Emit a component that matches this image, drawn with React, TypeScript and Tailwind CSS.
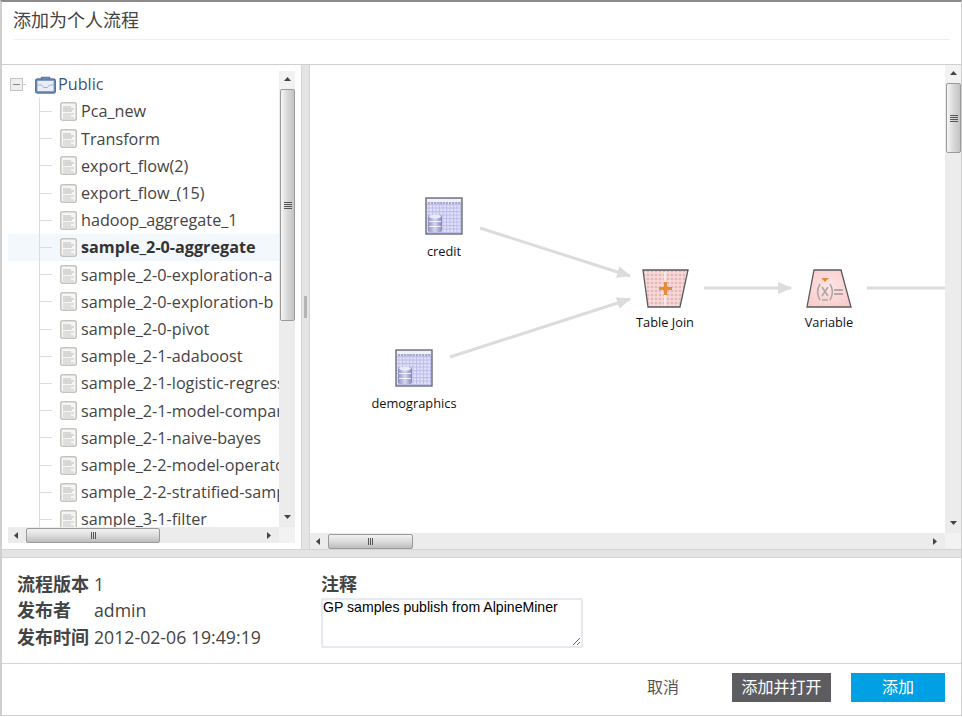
import type { ReactNode } from "react";

const flows = [
  "Pca_new",
  "Transform",
  "export_flow(2)",
  "export_flow_(15)",
  "hadoop_aggregate_1",
  "sample_2-0-aggregate",
  "sample_2-0-exploration-a",
  "sample_2-0-exploration-b",
  "sample_2-0-pivot",
  "sample_2-1-adaboost",
  "sample_2-1-logistic-regression",
  "sample_2-1-model-comparison",
  "sample_2-1-naive-bayes",
  "sample_2-2-model-operators",
  "sample_2-2-stratified-sampling",
  "sample_3-1-filter",
];

function DocIcon() {
  return (
    <svg width="17" height="19" viewBox="0 0 17 19" className="shrink-0">
      <rect x="0.75" y="0.75" width="15.5" height="17.5" rx="2" fill="#f6f6f6" stroke="#c4c4bc" strokeWidth="1.5" />
      <path d="M3 5h8M3 7h11M3 9h9" stroke="#b8b8b8" />
      <path d="M3 12h11M3 14h8M3 16h11" stroke="#c6c6c6" />
    </svg>
  );
}

function BriefcaseIcon() {
  return (
    <svg width="21" height="18" viewBox="0 0 21 18" className="shrink-0">
      <path d="M6.5 3V1.5h8V3" fill="none" stroke="#5f7da6" strokeWidth="1.5" />
      <rect x="0.75" y="3" width="19.5" height="14" rx="2" fill="#7f9cc4" stroke="#56749e" strokeWidth="1.5" />
      <rect x="2.5" y="5" width="16" height="10" fill="#e9eef5" />
      <path d="M2.5 9l4 0 2 2.5h4l2-2.5 4 0" fill="none" stroke="#9fb3cf" />
    </svg>
  );
}

function Grip({ vertical }: { vertical?: boolean }) {
  return vertical ? (
    <div className="flex flex-col gap-[1px]">
      <div className="w-[8px] h-[1px] bg-[#555]" />
      <div className="w-[8px] h-[1px] bg-[#555]" />
      <div className="w-[8px] h-[1px] bg-[#555]" />
      <div className="w-[8px] h-[1px] bg-[#555]" />
    </div>
  ) : (
    <div className="flex gap-[1px]">
      <div className="w-[1px] h-[7px] bg-[#555]" />
      <div className="w-[1px] h-[7px] bg-[#555]" />
      <div className="w-[1px] h-[7px] bg-[#555]" />
    </div>
  );
}

function Arrow({ dir }: { dir: "up" | "down" | "left" | "right" }) {
  const points = {
    up: "0,4 7,4 3.5,0",
    down: "0,0 7,0 3.5,4",
    left: "4,0 4,7 0,3.5",
    right: "0,0 0,7 4,3.5",
  }[dir];
  return (
    <svg width="7" height="7" viewBox="0 0 7 7" className="shrink-0">
      <polygon points={points} fill="#444" />
    </svg>
  );
}

function VScroll({ before, thumb, after }: { before: number; thumb: number; after: ReactNode }) {
  return (
    <div className="w-[16px] shrink-0 flex flex-col bg-[#ececec]">
      <div className="flex items-center justify-center shrink-0 bg-[#f2f2f2]" style={{ height: before }}>
        <Arrow dir="up" />
      </div>
      <div
        className="ml-[1px] w-[15px] shrink-0 rounded-[2px] border border-[#9a9a9a] bg-gradient-to-r from-[#f6f6f6] via-[#d8d8d8] to-[#c4c4c4] flex items-center justify-center"
        style={{ height: thumb }}
      >
        <Grip vertical />
      </div>
      <div className="flex-1" />
      {after}
    </div>
  );
}

function HScroll({ lead, thumb }: { lead: number; thumb: number }) {
  return (
    <div className="h-[16px] flex-1 flex items-center bg-[#ececec]">
      <div className="flex justify-center shrink-0" style={{ width: lead }}>
        <Arrow dir="left" />
      </div>
      <div
        className="h-[15px] shrink-0 rounded-[2px] border border-[#9a9a9a] bg-gradient-to-b from-[#f2f2f2] via-[#dcdcdc] to-[#bdbdbd] flex items-center justify-center"
        style={{ width: thumb }}
      >
        <Grip />
      </div>
      <div className="flex-1" />
      <div className="w-[18px] flex justify-center shrink-0">
        <Arrow dir="right" />
      </div>
    </div>
  );
}

function FlowTree() {
  return (
    <div className="relative flex-1 overflow-hidden text-[16.2px] text-[#444] min-w-0">
      <div className="h-[27px] flex items-center pl-[2px]">
        <div className="w-[13px] h-[13px] border border-[#c4c4c4] bg-[#eee] flex items-center justify-center shrink-0">
          <div className="w-[7px] h-[1px] bg-[#888]" />
        </div>
        <div className="w-[3px] h-[1px] bg-[#ccc] mr-[9px]" />
        <BriefcaseIcon />
        <span className="ml-[2px] text-[#3c5378]">Public</span>
      </div>
      {/* tree guide line */}
      <div className="absolute left-[31px] top-[27px] bottom-0 w-[1px] bg-[#dcdcdc]" />
      {flows.map((flow) => {
        const selected = flow === "sample_2-0-aggregate";
        return (
          <div
            key={flow}
            className={`h-[27.2px] flex items-center pl-[31px] whitespace-nowrap ${selected ? "bg-[#f3f8fc] font-bold text-[#333]" : ""}`}
          >
            <div className="w-[13px] h-[1px] bg-[#dcdcdc] mr-[8px] shrink-0" />
            <DocIcon />
            <span className="ml-[4px]">{flow}</span>
          </div>
        );
      })}
    </div>
  );
}

function TableIcon() {
  return (
    <svg width="38" height="38" viewBox="0 0 38 38">
      <defs>
        <linearGradient id="cylinder" x1="0" x2="1" y1="0" y2="0">
          <stop offset="0" stopColor="#8f8fc6" />
          <stop offset="0.5" stopColor="#d8d8f0" />
          <stop offset="1" stopColor="#8484bc" />
        </linearGradient>
        <pattern id="blue-grid" width="3.5" height="3.5" patternUnits="userSpaceOnUse">
          <rect width="3.5" height="3.5" fill="#e2e2f8" />
          <path d="M0 .5h3.5M.5 0v3.5" stroke="#bcbcec" />
        </pattern>
      </defs>
      <rect x="1" y="1" width="36" height="36" fill="url(#blue-grid)" stroke="#75757c" strokeWidth="1.5" />
      <rect x="2" y="2" width="34" height="3" fill="#f0f0fb" />
      <path d="M3 6h32" stroke="#9c9cae" strokeWidth="1.5" strokeDasharray="2 1" />
      <rect x="3" y="18" width="14" height="17" rx="2" fill="url(#cylinder)" />
      <ellipse cx="10" cy="19.5" rx="6" ry="2" fill="#e9e9f8" />
      <path d="M4 24.5h12M4 29.5h12" stroke="#f0f0fa" strokeWidth="1.2" />
    </svg>
  );
}

function JoinIcon() {
  return (
    <svg width="47" height="39" viewBox="0 0 47 39">
      <defs>
        <pattern id="red-grid" width="4" height="4" patternUnits="userSpaceOnUse">
          <rect width="4" height="4" fill="#f8dcdc" />
          <rect x="0.75" y="0.75" width="2.5" height="2.5" fill="#e6b6b6" />
        </pattern>
      </defs>
      <polygon points="1,1 46,1 38,38 6,38" fill="url(#red-grid)" stroke="#5a5a5a" strokeWidth="1.3" />
      <rect x="22" y="3" width="2" height="34" fill="#fbe9e9" />
      <path d="M23.5 13v13M17 19.5h13" stroke="#e58c3c" strokeWidth="3" />
    </svg>
  );
}

function VariableIcon() {
  return (
    <svg width="46" height="39" viewBox="0 0 46 39">
      <defs>
        <radialGradient id="pink" cx="0.5" cy="0.45" r="0.6">
          <stop offset="0" stopColor="#fde6e6" />
          <stop offset="1" stopColor="#facccc" />
        </radialGradient>
      </defs>
      <polygon points="8,1 35,1 45,38 1,38" fill="url(#pink)" stroke="#5a5a5a" strokeWidth="1.3" />
      <polygon points="15,9 23,9 19,13" fill="#e58c3c" />
      <path
        d="M14 15c-3 5-3 11 0 16M24 15c3 5 3 11 0 16M16 18l6 9M22 18l-6 9M16 31h6"
        fill="none"
        stroke="#b0a6a6"
        strokeWidth="1.6"
      />
      <path d="M28 21h9M28 25h9" stroke="#9d9494" strokeWidth="1.6" />
    </svg>
  );
}

// node on the flow canvas, placed by its position on the diagram
function FlowNode({ x, y, width, label, labelClass, children }: { x: number; y: number; width: number; label: string; labelClass: string; children: ReactNode }) {
  return (
    <div className="absolute flex flex-col items-center" style={{ left: x, top: y, width }}>
      <div className="h-[39px] flex items-center justify-center">{children}</div>
      <div className={`${labelClass} text-[12.8px] leading-[18px] text-[#111] whitespace-nowrap`}>{label}</div>
    </div>
  );
}

function FlowCanvas() {
  return (
    <div className="relative flex-1 overflow-hidden min-w-0">
      <svg width="635" height="468" className="absolute left-0 top-0">
        <defs>
          <marker id="big-head" markerWidth="14" markerHeight="14" refX="13" refY="7" orient="auto" markerUnits="userSpaceOnUse">
            <polygon points="0,1 14,7 0,13" fill="#dcdcdc" />
          </marker>
        </defs>
        <g stroke="#dcdcdc" strokeWidth="3" fill="none">
          <line x1="170" y1="163" x2="320" y2="211" markerEnd="url(#big-head)" />
          <line x1="140" y1="292" x2="320" y2="234" markerEnd="url(#big-head)" />
          <line x1="394" y1="223" x2="481" y2="223" markerEnd="url(#big-head)" />
          <line x1="557" y1="223" x2="635" y2="223" />
        </g>
      </svg>
      <FlowNode x={94} y={131} width={80} label="credit" labelClass="mt-[7px]">
        <TableIcon />
      </FlowNode>
      <FlowNode x={54} y={283} width={100} label="demographics" labelClass="mt-[7px]">
        <TableIcon />
      </FlowNode>
      <FlowNode x={305} y={204} width={100} label="Table Join" labelClass="mt-[5px]">
        <JoinIcon />
      </FlowNode>
      <FlowNode x={469} y={204} width={100} label="Variable" labelClass="mt-[5px]">
        <VariableIcon />
      </FlowNode>
    </div>
  );
}

export default function App() {
  return (
    <div className="w-[962px] h-[716px] flex flex-col bg-white border-t-2 border-l-2 border-r border-b border-t-[#8c8c8c] border-l-[#cfcfcf] border-r-[#cfcfcf] border-b-[#cfcfcf] overflow-hidden font-['Open_Sans','Noto_Sans_CJK_SC',sans-serif]">
      {/* Title */}
      <div className="h-[63px] shrink-0 px-[11px] border-b border-[#cfcfcf]">
        <div className="h-[38px] pt-[5px] text-[18px] leading-[26px] text-[#444] border-b border-[#efefef]">添加为个人流程</div>
      </div>

      {/* Tree and diagram */}
      <div className="h-[485px] shrink-0 flex bg-[#e4e4e4] border-b border-[#d4d4d4]">
        <div className="w-[300px] shrink-0 bg-white border-r border-[#d4d4d4] px-[6px] pt-[6px] pb-[6px] flex flex-col">
          <div className="flex-1 flex min-h-0">
            <FlowTree />
            <VScroll before={18} thumb={232} after={<div className="h-[18px] flex items-center justify-center shrink-0"><Arrow dir="down" /></div>} />
          </div>
          <div className="flex h-[16px] shrink-0">
            <HScroll lead={18} thumb={134} />
            <div className="w-[16px] bg-[#f2f2f2]" />
          </div>
        </div>

        <div className="w-[7px] shrink-0 flex items-center justify-center">
          <div className="w-[3px] h-[22px] bg-[#b4b4b4]" />
        </div>

        <div className="flex-1 min-w-0 bg-white border-l border-[#d4d4d4] flex flex-col">
          <div className="flex-1 flex min-h-0">
            <FlowCanvas />
            <VScroll before={18} thumb={70} after={<div className="h-[18px] flex items-center justify-center shrink-0"><Arrow dir="down" /></div>} />
          </div>
          <div className="flex h-[16px] shrink-0">
            <HScroll lead={18} thumb={85} />
            <div className="w-[16px] bg-[#f2f2f2]" />
          </div>
        </div>
      </div>

      <div className="h-[7px] shrink-0 bg-[#e4e4e4]" />

      {/* Flow details */}
      <div className="h-[107px] shrink-0 flex border-t border-b border-[#d4d4d4] pt-[13px] pl-[15px] text-[#444]">
        <div className="w-[304px] h-fit shrink-0 grid grid-cols-[77px_1fr] auto-rows-[26.5px] items-center">
          <span className="font-semibold text-[18px] whitespace-nowrap">流程版本</span>
          <span className="text-[17.7px]">1</span>
          <span className="font-semibold text-[18px] whitespace-nowrap">发布者</span>
          <span className="text-[17.7px]">admin</span>
          <span className="font-semibold text-[18px] whitespace-nowrap">发布时间</span>
          <span className="text-[17.7px]">2012-02-06 19:49:19</span>
        </div>
        <div className="flex flex-col">
          <span className="font-semibold text-[18px] leading-[27px]">注释</span>
          <textarea
            readOnly
            defaultValue="GP samples publish from AlpineMiner"
            className="w-[262px] h-[50px] rounded-[2px] border-2 border-[#e6e9f0] px-0 text-[14.1px] leading-[15px] text-black font-['Liberation_Sans',sans-serif] outline-none"
          />
        </div>
      </div>

      {/* Actions */}
      <div className="flex-1 flex items-start justify-end pt-[9px] pr-[16px] text-[16px]">
        <button className="w-[60px] h-[29px] pb-[2px] text-[#555]">取消</button>
        <button className="ml-[39px] w-[99px] h-[29px] pb-[2px] bg-[#5d5d61] text-white">添加并打开</button>
        <button className="ml-[20px] w-[94px] h-[29px] pb-[2px] bg-[#00a0e4] text-white">添加</button>
      </div>
    </div>
  );
}
